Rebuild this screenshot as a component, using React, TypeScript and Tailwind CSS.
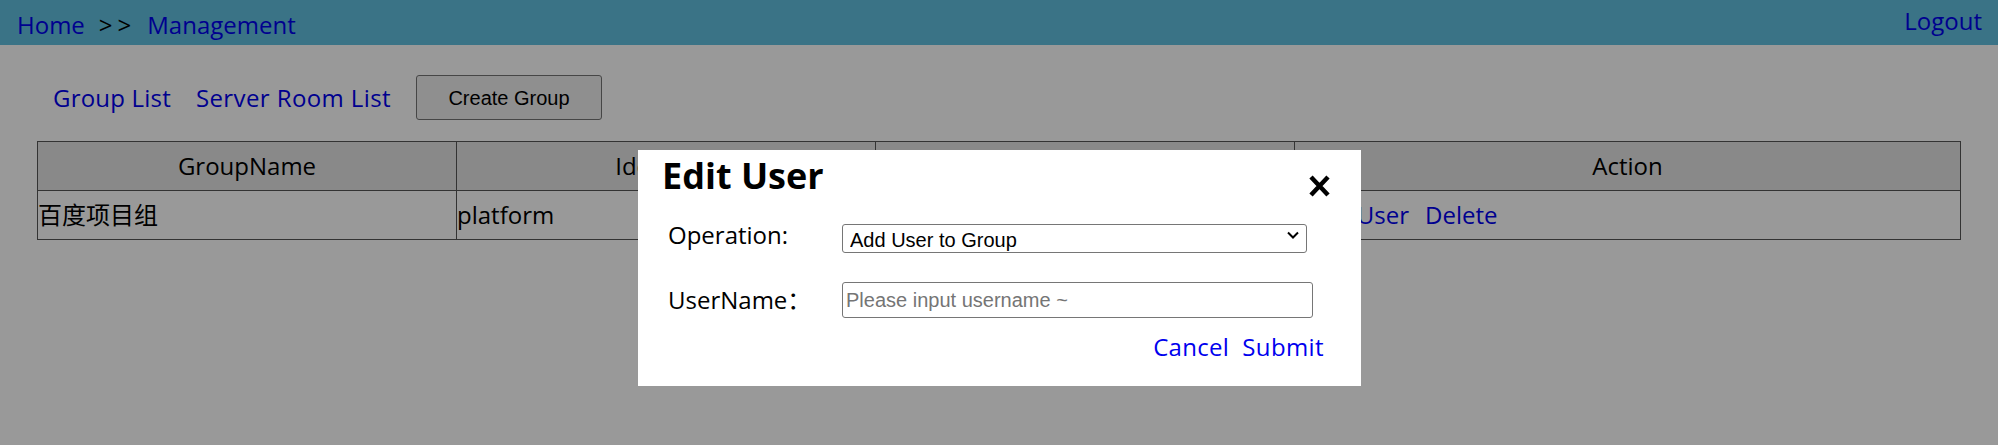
import React from "react";

const font = { fontFamily: "'Open Sans', 'Noto Sans CJK SC', sans-serif" };

export default function App() {
  return (
    <div className="relative w-[1998px] h-[445px] bg-white overflow-hidden font-['Open_Sans','Noto_Sans_CJK_SC',sans-serif] text-[24px] text-black">
      {/* Header */}
      <div className="h-[45px] bg-[#61c0e0] flex justify-between">
        <div className="flex pl-[17px] pt-[9px] leading-[32px]">
          <a className="text-[#0000ee]">Home</a>
          <span className="ml-[14px] mr-[11px] text-black tracking-[5px]">&gt;&gt;</span>
          <a className="text-[#0000ee]">Management</a>
        </div>
        <a className="pr-[16px] pt-[5px] leading-[32px] text-[#0000ee]">Logout</a>
      </div>

      {/* Nav row */}
      <div className="flex items-center pl-[53px] mt-[30px] h-[45px]">
        <a className="text-[#0000ee] leading-[32px] tracking-[0.2px]">Group List</a>
        <a className="ml-[25px] text-[#0000ee] leading-[32px] tracking-[0.4px]">Server Room List</a>
        <button className="ml-[25px] w-[186px] h-[45px] bg-[#efefef] border border-[#767676] rounded-[3px] text-[20px] font-['Liberation_Sans',Arial,sans-serif] text-black">
          Create Group
        </button>
      </div>

      {/* Table */}
      <div className="px-[37px] mt-[21px]">
        <table className="w-full border-collapse border border-[#555] table-fixed">
          <colgroup>
            <col className="w-[419px]" />
            <col className="w-[419px]" />
            <col className="w-[419px]" />
            <col />
          </colgroup>
          <thead>
            <tr className="h-[49px] bg-[#e5e5e5]">
              <th className="border border-[#555] font-normal text-center">GroupName</th>
              <th className="border border-[#555] font-normal text-center">Identifier</th>
              <th className="border border-[#555] font-normal text-center">ServerRoom</th>
              <th className="border border-[#555] font-normal text-center">Action</th>
            </tr>
          </thead>
          <tbody>
            <tr className="h-[49px]">
              <td className="border border-[#555] p-0 text-left">百度项目组</td>
              <td className="border border-[#555] p-0 text-left">platform</td>
              <td className="border border-[#555] p-0 text-left">百度机房</td>
              <td className="border border-[#555] p-0 text-left">
                <a className="ml-[13px] text-[#0000ee]">Edit User</a>
                <a className="ml-[16px] text-[#0000ee]">Delete</a>
              </td>
            </tr>
          </tbody>
        </table>
      </div>

      {/* Overlay */}
      <div className="absolute inset-0 bg-[rgba(0,0,0,0.4)]" />

      {/* Modal */}
      <div
        className="absolute top-[150px] left-[638px] w-[723px] h-[236px] bg-white"
        style={font}
      >
        <div className="flex justify-between items-start pl-[24px] pr-[30px] pt-[2px]">
          <h2 className="text-[36px] font-bold leading-[48px]">Edit User</h2>
          <svg width="23" height="22" viewBox="0 0 23 22" className="mt-[23px]">
            <path d="M3 2 L20 20 M20 2 L3 20" stroke="#000" strokeWidth="4.5" strokeLinecap="butt" />
          </svg>
        </div>

        <div className="flex items-center pl-[30px] mt-[20px] h-[29px]">
          <label className="w-[174px] leading-[32px]">Operation:</label>
          <div className="relative w-[465px] h-[29px]">
            <select className="appearance-none w-full h-full bg-white border border-[#767676] rounded-[3px] pl-[7px] text-[20px] font-['Liberation_Sans',Arial,sans-serif] text-black outline-none">
              <option>Add User to Group</option>
              <option>Remove User from Group</option>
            </select>
            <svg
              width="12"
              height="8"
              viewBox="0 0 12 8"
              className="absolute right-[8px] top-[11px] pointer-events-none"
            >
              <path d="M1 1.5 L6 6.5 L11 1.5" stroke="#000" strokeWidth="2" fill="none" />
            </svg>
          </div>
        </div>

        <div className="flex items-center pl-[30px] mt-[33px] h-[36px]">
          <label className="w-[174px] leading-[32px]">UserName：</label>
          <input
            className="w-[471px] h-[36px] border border-[#767676] rounded-[3px] pl-[3px] text-[20px] font-['Liberation_Sans',Arial,sans-serif] placeholder:text-[#757575] outline-none"
            placeholder="Please input username ~"
          />
        </div>

        <div className="flex justify-end pr-[37px] mt-[13px] leading-[32px]">
          <a className="text-[#0000ee] tracking-[0.3px]">Cancel</a>
          <a className="ml-[13px] text-[#0000ee] tracking-[0.4px]">Submit</a>
        </div>
      </div>
    </div>
  );
}
